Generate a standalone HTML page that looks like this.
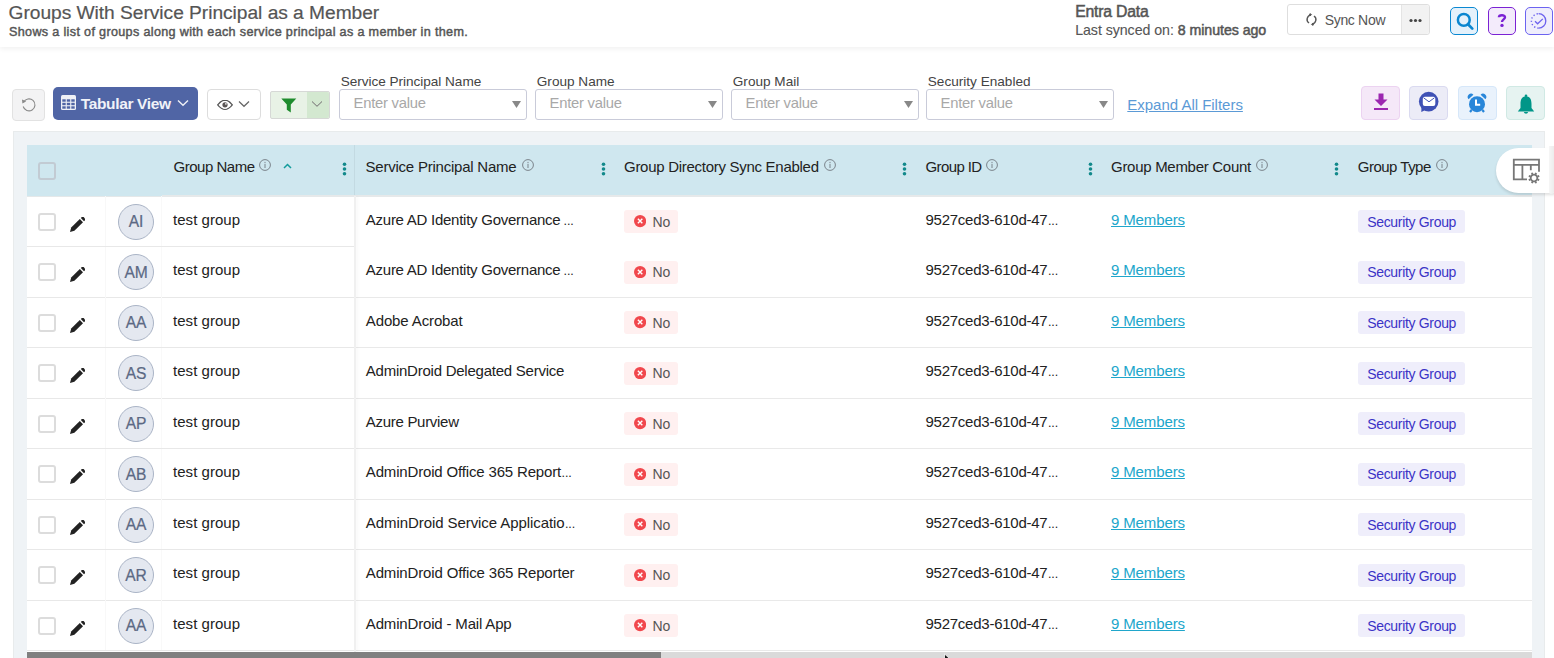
<!DOCTYPE html><html><head><meta charset="utf-8"><style>
*{box-sizing:border-box;margin:0;padding:0}
html,body{width:1554px;height:658px;overflow:hidden;background:#fff;font-family:"Liberation Sans",sans-serif;color:#222}
.a{position:absolute;white-space:nowrap}
</style></head><body>
<div class="a" style="left:0;top:0;width:1554px;height:47px;background:#fff;box-shadow:0 2px 5px rgba(0,0,0,0.06)"></div>
<div class="a" style="left:8.50px;top:0.00px;font-size:19.2px;line-height:25px;letter-spacing:-0.035px;color:#555;-webkit-text-stroke:0.2px #555">Groups With Service Principal as a Member</div>
<div class="a" style="left:9.00px;top:24.00px;font-size:12.6px;line-height:16px;letter-spacing:0.335px;color:#555;-webkit-text-stroke:0.45px #555">Shows a list of groups along with each service principal as a member in them.</div>
<div class="a" style="left:1075.20px;top:1.00px;font-size:15.8px;line-height:21px;letter-spacing:-0.226px;color:#555;-webkit-text-stroke:0.5px #555">Entra Data</div>
<div class="a" style="left:1075.20px;top:21.00px;font-size:14.2px;line-height:18px;letter-spacing:-0.050px;color:#555;-webkit-text-stroke:0.1px #555">Last synced on: <span style="-webkit-text-stroke:0.5px #555">8 minutes ago</span></div>
<div class="a" style="left:1287px;top:4px;width:143px;height:31px;border:1px solid #dedede;border-radius:3px;background:#fff"></div>
<div class="a" style="left:1401px;top:5px;width:28px;height:29px;background:#f2f2f2;border-left:1px solid #e4e4e4;border-radius:0 3px 3px 0"></div>
<svg class="a" style="left:1305px;top:13px" width="13" height="13" viewBox="0 0 13 13"><g transform="rotate(-55 6.5 6.5)"><path d="M2.2 6.5 A4.3 4.3 0 0 1 9.8 3.6" fill="none" stroke="#555" stroke-width="1.4"/><path d="M10.8 6.5 A4.3 4.3 0 0 1 3.2 9.4" fill="none" stroke="#555" stroke-width="1.4"/><path d="M8.3 1.8 L11 1.6 L10.6 4.6 Z" fill="#555"/><path d="M4.7 11.2 L2 11.4 L2.4 8.4 Z" fill="#555"/></g></svg>
<div class="a" style="left:1324.70px;top:11.00px;font-size:14px;line-height:18px;letter-spacing:-0.317px;color:#555;">Sync Now</div>
<svg class="a" style="left:1409px;top:18px" width="13" height="5"><circle cx="2" cy="2.5" r="1.6" fill="#444"/><circle cx="6.5" cy="2.5" r="1.6" fill="#444"/><circle cx="11" cy="2.5" r="1.6" fill="#444"/></svg>
<div class="a" style="left:1450px;top:7px;width:28px;height:28px;border:1.5px solid #0a88d2;border-radius:5px;background:#e4f1fb"></div>
<svg class="a" style="left:1455px;top:12px" width="20" height="20" viewBox="0 0 20 20"><circle cx="8.8" cy="7.9" r="5.9" fill="none" stroke="#0a86d0" stroke-width="2.5"/><path d="M13 12.2 L17.3 16.6" stroke="#0a86d0" stroke-width="2.7" stroke-linecap="round"/></svg>
<div class="a" style="left:1488px;top:7px;width:28px;height:28px;border:1.5px solid #7b22d4;border-radius:5px;background:#f3ebfb"></div>
<svg class="a" style="left:1495px;top:13px" width="14" height="15" viewBox="0 0 14 15"><path d="M3.9 4.3 C3.9 1.6 10 1.4 10 4.3 C10 6.3 7 6.5 7 8.9" fill="none" stroke="#7b22d4" stroke-width="2.4"/><circle cx="7" cy="12.4" r="1.7" fill="#7b22d4"/></svg>
<div class="a" style="left:1525px;top:7px;width:28px;height:28px;border:1.5px solid #6c63f0;border-radius:5px;background:#efeefc"></div>
<svg class="a" style="left:1529px;top:12px" width="20" height="20" viewBox="0 0 20 20"><path d="M9.6 1.7 A7.2 7.2 0 0 1 9.6 16.1" fill="none" stroke="#6c62ee" stroke-width="1.3"/><path d="M9.6 16.1 A7.2 7.2 0 0 1 9.6 1.7" fill="none" stroke="#6c62ee" stroke-width="1.4" stroke-dasharray="1.3 2.1"/><path d="M6 9.3 L8.6 11.8 L13.8 6.9" fill="none" stroke="#6c62ee" stroke-width="1.3"/></svg>
<div class="a" style="left:12px;top:89px;width:33px;height:32px;border:1px solid #e2e2e2;border-radius:4px;background:#f3f3f4"></div>
<svg class="a" style="left:20px;top:96px" width="17" height="17" viewBox="0 0 17 17"><path d="M3.6 6.2 A6 6 0 1 1 3.2 10.5" fill="none" stroke="#888" stroke-width="1.1"/><path d="M2 3.5 L6.2 5.2 L2.4 7.6 Z" fill="#888"/></svg>
<div class="a" style="left:53px;top:87px;width:145px;height:33px;border-radius:5px;background:#5065a5"></div>
<svg class="a" style="left:61px;top:95px" width="15" height="15" viewBox="0 0 15 15"><rect x="0" y="0" width="15" height="15" rx="1.5" fill="#eef0f6"/><g fill="#5065a5"><rect x="1.3" y="4.3" width="3.4" height="2.4"/><rect x="5.8" y="4.3" width="3.4" height="2.4"/><rect x="10.3" y="4.3" width="3.4" height="2.4"/><rect x="1.3" y="7.8" width="3.4" height="2.4"/><rect x="5.8" y="7.8" width="3.4" height="2.4"/><rect x="10.3" y="7.8" width="3.4" height="2.4"/><rect x="1.3" y="11.3" width="3.4" height="2.4"/><rect x="5.8" y="11.3" width="3.4" height="2.4"/><rect x="10.3" y="11.3" width="3.4" height="2.4"/></g></svg>
<div class="a" style="left:80.70px;top:94.00px;font-size:15.5px;line-height:20px;letter-spacing:-0.344px;font-weight:bold;color:#f0f2f8;">Tabular View</div>
<svg class="a" style="left:177px;top:99px" width="12" height="8" viewBox="0 0 12 8"><path d="M1 1.5 L6 6.3 L11 1.5" fill="none" stroke="#eef0f6" stroke-width="1.4"/></svg>
<div class="a" style="left:207px;top:89px;width:54px;height:31px;border:1px solid #dddddd;border-radius:4px;background:#fff"></div>
<svg class="a" style="left:217px;top:99.5px" width="16" height="10" viewBox="0 0 16 10"><path d="M0.7 4.8 Q8 -4.3 15.3 4.8 Q8 13.9 0.7 4.8 Z" fill="none" stroke="#555" stroke-width="1.3"/><circle cx="8" cy="4.8" r="3.9" fill="#fff"/><circle cx="8" cy="4.8" r="2.6" fill="#5a5555"/><circle cx="8.9" cy="3.9" r="0.8" fill="#fff"/></svg>
<svg class="a" style="left:238px;top:100px" width="12" height="8" viewBox="0 0 12 8"><path d="M1 1.5 L6 6.3 L11 1.5" fill="none" stroke="#666" stroke-width="1.2"/></svg>
<div class="a" style="left:270px;top:91px;width:60px;height:28px;border:1px solid #d6d8d6;border-radius:2px;background:#e8f2e6"></div>
<div class="a" style="left:307px;top:92px;width:22px;height:26px;background:#d3e8d0;border-radius:0 2px 2px 0"></div>
<svg class="a" style="left:281px;top:98px" width="16" height="15" viewBox="0 0 16 15"><path d="M0.3 0.5 L15.3 0.5 L9.8 6.6 L9.8 14.5 L5.8 11.8 L5.8 6.6 Z" fill="#1e8b2d"/></svg>
<svg class="a" style="left:311px;top:100px" width="12" height="8" viewBox="0 0 12 8"><path d="M1 1.5 L6 6.3 L11 1.5" fill="none" stroke="#6f6a6e" stroke-width="1"/></svg>
<div class="a" style="left:340.80px;top:73.00px;font-size:13.6px;line-height:18px;letter-spacing:-0.040px;color:#444;">Service Principal Name</div>
<div class="a" style="left:339px;top:89px;width:188px;height:31px;border:1px solid #c9cbd9;border-radius:3px;background:#fff"></div>
<div class="a" style="left:353.60px;top:94.00px;font-size:14.8px;line-height:19px;letter-spacing:-0.257px;color:#a8a8a8;">Enter value</div>
<svg class="a" style="left:512px;top:101px" width="9" height="7" viewBox="0 0 9 7"><path d="M0 0 L9 0 L4.5 7 Z" fill="#888"/></svg>
<div class="a" style="left:536.80px;top:73.00px;font-size:13.6px;line-height:18px;letter-spacing:0.000px;color:#444;">Group Name</div>
<div class="a" style="left:535px;top:89px;width:188px;height:31px;border:1px solid #c9cbd9;border-radius:3px;background:#fff"></div>
<div class="a" style="left:549.60px;top:94.00px;font-size:14.8px;line-height:19px;letter-spacing:-0.257px;color:#a8a8a8;">Enter value</div>
<svg class="a" style="left:708px;top:101px" width="9" height="7" viewBox="0 0 9 7"><path d="M0 0 L9 0 L4.5 7 Z" fill="#888"/></svg>
<div class="a" style="left:732.80px;top:73.00px;font-size:13.6px;line-height:18px;letter-spacing:0.000px;color:#444;">Group Mail</div>
<div class="a" style="left:731px;top:89px;width:188px;height:31px;border:1px solid #c9cbd9;border-radius:3px;background:#fff"></div>
<div class="a" style="left:745.60px;top:94.00px;font-size:14.8px;line-height:19px;letter-spacing:-0.257px;color:#a8a8a8;">Enter value</div>
<svg class="a" style="left:904px;top:101px" width="9" height="7" viewBox="0 0 9 7"><path d="M0 0 L9 0 L4.5 7 Z" fill="#888"/></svg>
<div class="a" style="left:927.80px;top:73.00px;font-size:13.6px;line-height:18px;letter-spacing:0.000px;color:#444;">Security Enabled</div>
<div class="a" style="left:926px;top:89px;width:188px;height:31px;border:1px solid #c9cbd9;border-radius:3px;background:#fff"></div>
<div class="a" style="left:940.60px;top:94.00px;font-size:14.8px;line-height:19px;letter-spacing:-0.257px;color:#a8a8a8;">Enter value</div>
<svg class="a" style="left:1099px;top:101px" width="9" height="7" viewBox="0 0 9 7"><path d="M0 0 L9 0 L4.5 7 Z" fill="#888"/></svg>
<div class="a" style="left:1127.30px;top:95.00px;font-size:15px;line-height:20px;letter-spacing:-0.017px;color:#5b9ad6;text-decoration:underline">Expand All Filters</div>
<div class="a" style="left:1361px;top:86px;width:39px;height:34px;border:1px solid #ecd3f1;border-radius:4px;background:#f5e8f8"></div>
<svg class="a" style="left:1373px;top:93px" width="16" height="18" viewBox="0 0 16 18"><path d="M5.5 0.5 L10.5 0.5 L10.5 6.5 L14.5 6.5 L8 13 L1.5 6.5 L5.5 6.5 Z" fill="#9c27b0"/><rect x="1" y="15" width="14" height="2" fill="#9c27b0"/></svg>
<div class="a" style="left:1409px;top:86px;width:39px;height:34px;border:1px solid #dadaf0;border-radius:4px;background:#ececf7"></div>
<svg class="a" style="left:1418px;top:91px" width="22" height="22" viewBox="0 0 22 22"><circle cx="10.7" cy="10.6" r="9.8" fill="#3f51b5"/><path d="M3.5 15.5 L3.3 21 L8.5 18.5 Z" fill="#3f51b5"/><rect x="4.8" y="5.8" width="12.5" height="9.2" rx="2" fill="#fff"/><path d="M5.6 6.8 L11 10.8 L16.4 6.8" fill="none" stroke="#3f51b5" stroke-width="1"/></svg>
<div class="a" style="left:1458px;top:86px;width:39px;height:34px;border:1px solid #d6e7f9;border-radius:4px;background:#e9f2fc"></div>
<svg class="a" style="left:1467px;top:93px" width="20" height="20" viewBox="0 0 20 20"><circle cx="10" cy="11.2" r="8" fill="#2886d9"/><path d="M1.6 6.2 A3.1 3.1 0 0 1 6.4 1.8 Z" fill="#2886d9"/><path d="M18.4 6.2 A3.1 3.1 0 0 0 13.6 1.8 Z" fill="#2886d9"/><path d="M9 6.5 L9 11.8 L13.2 11.8" fill="none" stroke="#fff" stroke-width="2"/><path d="M4.6 17 L3 19 M15.4 17 L17 19" stroke="#2886d9" stroke-width="2.2"/></svg>
<div class="a" style="left:1506px;top:86px;width:39px;height:34px;border:1px solid #d0e9e4;border-radius:4px;background:#e6f3f1"></div>
<svg class="a" style="left:1517px;top:93.5px" width="18" height="21" viewBox="0 0 18 21"><circle cx="9" cy="1.8" r="1.3" fill="#009688"/><path d="M9 2.2 C4.5 2.2 3.5 6 3.5 10 L3.5 14 L0.8 17.5 L17.2 17.5 L14.5 14 L14.5 10 C14.5 6 13.5 2.2 9 2.2 Z" fill="#009688"/><path d="M6.8 18 A2.3 2.3 0 0 0 11.2 18 Z" fill="#009688"/></svg>
<div class="a" style="left:13px;top:131px;width:1532px;height:527px;background:#eff3f6;border:1px solid #e8ebec;border-bottom:none"></div>
<div class="a" style="left:27px;top:145px;width:1505px;height:513px;background:#fff;overflow:hidden">
<div class="a" style="left:0;top:0;width:1505px;height:51px;background:#cfe7ef"></div>
<div class="a" style="left:11px;top:17px;width:18px;height:18px;border:2px solid #c2cbd3;border-radius:3px;background:#cfe7ef"></div>
<div class="a" style="left:146.50px;top:12.00px;font-size:15px;line-height:20px;letter-spacing:-0.486px;color:#222;">Group Name</div>
<svg class="a" style="left:232px;top:14.4px" width="12" height="12" viewBox="0 0 12 12"><circle cx="6" cy="6" r="5.4" fill="none" stroke="#7b838b" stroke-width="1"/><rect x="5.5" y="4.8" width="1" height="4.2" fill="#7b838b"/><circle cx="6" cy="3.3" r="0.65" fill="#7b838b"/></svg>
<svg class="a" style="left:314.5px;top:16.8px" width="5" height="14" viewBox="0 0 5 14"><circle cx="2.5" cy="2.3" r="1.8" fill="#12898b"/><circle cx="2.5" cy="7" r="1.8" fill="#12898b"/><circle cx="2.5" cy="11.7" r="1.8" fill="#12898b"/></svg>
<div class="a" style="left:338.60px;top:12.00px;font-size:15px;line-height:20px;letter-spacing:-0.233px;color:#222;">Service Principal Name</div>
<svg class="a" style="left:495px;top:14.4px" width="12" height="12" viewBox="0 0 12 12"><circle cx="6" cy="6" r="5.4" fill="none" stroke="#7b838b" stroke-width="1"/><rect x="5.5" y="4.8" width="1" height="4.2" fill="#7b838b"/><circle cx="6" cy="3.3" r="0.65" fill="#7b838b"/></svg>
<svg class="a" style="left:574.0px;top:16.8px" width="5" height="14" viewBox="0 0 5 14"><circle cx="2.5" cy="2.3" r="1.8" fill="#12898b"/><circle cx="2.5" cy="7" r="1.8" fill="#12898b"/><circle cx="2.5" cy="11.7" r="1.8" fill="#12898b"/></svg>
<div class="a" style="left:597.00px;top:12.00px;font-size:15px;line-height:20px;letter-spacing:-0.282px;color:#222;">Group Directory Sync Enabled</div>
<svg class="a" style="left:796.5px;top:14.4px" width="12" height="12" viewBox="0 0 12 12"><circle cx="6" cy="6" r="5.4" fill="none" stroke="#7b838b" stroke-width="1"/><rect x="5.5" y="4.8" width="1" height="4.2" fill="#7b838b"/><circle cx="6" cy="3.3" r="0.65" fill="#7b838b"/></svg>
<svg class="a" style="left:874.5px;top:16.8px" width="5" height="14" viewBox="0 0 5 14"><circle cx="2.5" cy="2.3" r="1.8" fill="#12898b"/><circle cx="2.5" cy="7" r="1.8" fill="#12898b"/><circle cx="2.5" cy="11.7" r="1.8" fill="#12898b"/></svg>
<div class="a" style="left:898.60px;top:12.00px;font-size:15px;line-height:20px;letter-spacing:-0.637px;color:#222;">Group ID</div>
<svg class="a" style="left:959px;top:14.4px" width="12" height="12" viewBox="0 0 12 12"><circle cx="6" cy="6" r="5.4" fill="none" stroke="#7b838b" stroke-width="1"/><rect x="5.5" y="4.8" width="1" height="4.2" fill="#7b838b"/><circle cx="6" cy="3.3" r="0.65" fill="#7b838b"/></svg>
<svg class="a" style="left:1060.5px;top:16.8px" width="5" height="14" viewBox="0 0 5 14"><circle cx="2.5" cy="2.3" r="1.8" fill="#12898b"/><circle cx="2.5" cy="7" r="1.8" fill="#12898b"/><circle cx="2.5" cy="11.7" r="1.8" fill="#12898b"/></svg>
<div class="a" style="left:1084.00px;top:12.00px;font-size:15px;line-height:20px;letter-spacing:-0.286px;color:#222;">Group Member Count</div>
<svg class="a" style="left:1229px;top:14.4px" width="12" height="12" viewBox="0 0 12 12"><circle cx="6" cy="6" r="5.4" fill="none" stroke="#7b838b" stroke-width="1"/><rect x="5.5" y="4.8" width="1" height="4.2" fill="#7b838b"/><circle cx="6" cy="3.3" r="0.65" fill="#7b838b"/></svg>
<svg class="a" style="left:1306.8px;top:16.8px" width="5" height="14" viewBox="0 0 5 14"><circle cx="2.5" cy="2.3" r="1.8" fill="#12898b"/><circle cx="2.5" cy="7" r="1.8" fill="#12898b"/><circle cx="2.5" cy="11.7" r="1.8" fill="#12898b"/></svg>
<div class="a" style="left:1330.80px;top:12.00px;font-size:15px;line-height:20px;letter-spacing:-0.512px;color:#222;">Group Type</div>
<svg class="a" style="left:1409px;top:14.4px" width="12" height="12" viewBox="0 0 12 12"><circle cx="6" cy="6" r="5.4" fill="none" stroke="#7b838b" stroke-width="1"/><rect x="5.5" y="4.8" width="1" height="4.2" fill="#7b838b"/><circle cx="6" cy="3.3" r="0.65" fill="#7b838b"/></svg>
<svg class="a" style="left:256px;top:18px" width="9" height="6" viewBox="0 0 9 6"><path d="M1 5 L4.5 1.5 L8 5" fill="none" stroke="#139c9c" stroke-width="1.5"/></svg>
<div class="a" style="left:327px;top:0;width:1px;height:51px;background:#c3dae2"></div>
<div class="a" style="left:135px;top:49.7px;width:1370px;height:2.2px;background:#e6e9ea"></div>
<div class="a" style="left:0;top:50.6px;width:135px;height:1px;background:#e4e8e9"></div>
<div class="a" style="left:0;top:101.0px;width:328px;height:1px;background:#e8e8e8"></div>
<div class="a" style="left:11px;top:67.5px;width:18px;height:18px;border:2px solid #dcdcdc;border-radius:3px;background:#fff"></div>
<svg class="a" style="left:42px;top:71.5px" width="16" height="16" viewBox="0 0 16 16"><path d="M1 15 L2.2 10.6 L10.8 2 L14 5.2 L5.4 13.8 Z" fill="#222"/><path d="M11.8 1 L13 -0.2 A1 1 0 0 1 14.4 -0.2 L16.2 1.6 A1 1 0 0 1 16.2 3 L15 4.2 Z" fill="#222"/></svg>
<div class="a" style="left:78px;top:51.0px;width:1px;height:50px;background:#f8f8f8"></div>
<div class="a" style="left:134px;top:51.0px;width:1px;height:50px;background:#f9f9f9"></div>
<div class="a" style="left:91px;top:58.5px;width:36px;height:36px;border-radius:50%;background:#e4e8f0;border:1px solid #aab4c6"></div>
<div class="a" style="left:91.00px;top:67.00px;font-size:15.6px;line-height:20px;letter-spacing:-0.150px;color:#5b6984;width:36px;text-align:center;text-indent:-0.15px;-webkit-text-stroke:0.22px #5b6984">AI</div>
<div class="a" style="left:146.00px;top:65.00px;font-size:15px;line-height:20px;letter-spacing:0.043px;color:#222;">test group</div>
<div class="a" style="left:338.80px;top:65.00px;font-size:15px;line-height:20px;letter-spacing:-0.255px;color:#222;">Azure AD Identity Governance</div>
<div class="a" style="left:536.60px;top:68.00px;font-size:12.5px;line-height:16px;letter-spacing:-0.100px;color:#222;">...</div>
<div class="a" style="left:597px;top:65.0px;width:54px;height:23px;border-radius:3px;background:#fff0f0"></div>
<svg class="a" style="left:606.6px;top:70.4px" width="12.2" height="12.2" viewBox="0 0 12 12"><circle cx="6" cy="6" r="6" fill="#f1474c"/><path d="M3.8 3.8 L8.2 8.2 M8.2 3.8 L3.8 8.2" stroke="#fff" stroke-width="1.4"/></svg>
<div class="a" style="left:625.50px;top:68.00px;font-size:14px;line-height:18px;letter-spacing:0.000px;color:#555;">No</div>
<div class="a" style="left:898.50px;top:65.00px;font-size:15px;line-height:20px;letter-spacing:-0.250px;color:#222;">9527ced3-610d-47</div>
<div class="a" style="left:1020.90px;top:68.00px;font-size:12.5px;line-height:16px;letter-spacing:-0.100px;color:#222;">...</div>
<div class="a" style="left:1084.00px;top:65.00px;font-size:15px;line-height:20px;letter-spacing:-0.128px;color:#20a6cb;text-decoration:underline">9 Members</div>
<div class="a" style="left:1331px;top:65.0px;width:107px;height:23px;border-radius:3px;background:#efeefb"></div>
<div class="a" style="left:1340.20px;top:68.00px;font-size:14px;line-height:18px;letter-spacing:-0.321px;color:#3b33c6;">Security Group</div>
<div class="a" style="left:0;top:151.5px;width:328px;height:1px;background:#e8e8e8"></div>
<div class="a" style="left:328px;top:151.5px;width:1177px;height:1px;background:#e9e9e9"></div>
<div class="a" style="left:11px;top:118.0px;width:18px;height:18px;border:2px solid #dcdcdc;border-radius:3px;background:#fff"></div>
<svg class="a" style="left:42px;top:122.0px" width="16" height="16" viewBox="0 0 16 16"><path d="M1 15 L2.2 10.6 L10.8 2 L14 5.2 L5.4 13.8 Z" fill="#222"/><path d="M11.8 1 L13 -0.2 A1 1 0 0 1 14.4 -0.2 L16.2 1.6 A1 1 0 0 1 16.2 3 L15 4.2 Z" fill="#222"/></svg>
<div class="a" style="left:78px;top:101.5px;width:1px;height:50px;background:#f8f8f8"></div>
<div class="a" style="left:134px;top:101.5px;width:1px;height:50px;background:#f9f9f9"></div>
<div class="a" style="left:91px;top:109.0px;width:36px;height:36px;border-radius:50%;background:#e4e8f0;border:1px solid #aab4c6"></div>
<div class="a" style="left:91.00px;top:118.00px;font-size:15.6px;line-height:20px;letter-spacing:-0.150px;color:#5b6984;width:36px;text-align:center;text-indent:-0.15px;-webkit-text-stroke:0.22px #5b6984">AM</div>
<div class="a" style="left:146.00px;top:115.00px;font-size:15px;line-height:20px;letter-spacing:0.043px;color:#222;">test group</div>
<div class="a" style="left:338.80px;top:115.00px;font-size:15px;line-height:20px;letter-spacing:-0.255px;color:#222;">Azure AD Identity Governance</div>
<div class="a" style="left:536.60px;top:118.00px;font-size:12.5px;line-height:16px;letter-spacing:-0.100px;color:#222;">...</div>
<div class="a" style="left:597px;top:115.5px;width:54px;height:23px;border-radius:3px;background:#fff0f0"></div>
<svg class="a" style="left:606.6px;top:120.9px" width="12.2" height="12.2" viewBox="0 0 12 12"><circle cx="6" cy="6" r="6" fill="#f1474c"/><path d="M3.8 3.8 L8.2 8.2 M8.2 3.8 L3.8 8.2" stroke="#fff" stroke-width="1.4"/></svg>
<div class="a" style="left:625.50px;top:118.00px;font-size:14px;line-height:18px;letter-spacing:0.000px;color:#555;">No</div>
<div class="a" style="left:898.50px;top:115.00px;font-size:15px;line-height:20px;letter-spacing:-0.250px;color:#222;">9527ced3-610d-47</div>
<div class="a" style="left:1020.90px;top:118.00px;font-size:12.5px;line-height:16px;letter-spacing:-0.100px;color:#222;">...</div>
<div class="a" style="left:1084.00px;top:115.00px;font-size:15px;line-height:20px;letter-spacing:-0.128px;color:#20a6cb;text-decoration:underline">9 Members</div>
<div class="a" style="left:1331px;top:115.5px;width:107px;height:23px;border-radius:3px;background:#efeefb"></div>
<div class="a" style="left:1340.20px;top:118.00px;font-size:14px;line-height:18px;letter-spacing:-0.321px;color:#3b33c6;">Security Group</div>
<div class="a" style="left:0;top:202.0px;width:328px;height:1px;background:#e8e8e8"></div>
<div class="a" style="left:328px;top:202.0px;width:1177px;height:1px;background:#e9e9e9"></div>
<div class="a" style="left:11px;top:168.5px;width:18px;height:18px;border:2px solid #dcdcdc;border-radius:3px;background:#fff"></div>
<svg class="a" style="left:42px;top:172.5px" width="16" height="16" viewBox="0 0 16 16"><path d="M1 15 L2.2 10.6 L10.8 2 L14 5.2 L5.4 13.8 Z" fill="#222"/><path d="M11.8 1 L13 -0.2 A1 1 0 0 1 14.4 -0.2 L16.2 1.6 A1 1 0 0 1 16.2 3 L15 4.2 Z" fill="#222"/></svg>
<div class="a" style="left:78px;top:152.0px;width:1px;height:50px;background:#f8f8f8"></div>
<div class="a" style="left:134px;top:152.0px;width:1px;height:50px;background:#f9f9f9"></div>
<div class="a" style="left:91px;top:159.5px;width:36px;height:36px;border-radius:50%;background:#e4e8f0;border:1px solid #aab4c6"></div>
<div class="a" style="left:91.00px;top:168.00px;font-size:15.6px;line-height:20px;letter-spacing:-0.150px;color:#5b6984;width:36px;text-align:center;text-indent:-0.15px;-webkit-text-stroke:0.22px #5b6984">AA</div>
<div class="a" style="left:146.00px;top:166.00px;font-size:15px;line-height:20px;letter-spacing:0.043px;color:#222;">test group</div>
<div class="a" style="left:338.80px;top:166.00px;font-size:15px;line-height:20px;letter-spacing:-0.126px;color:#222;">Adobe Acrobat</div>
<div class="a" style="left:597px;top:166.0px;width:54px;height:23px;border-radius:3px;background:#fff0f0"></div>
<svg class="a" style="left:606.6px;top:171.4px" width="12.2" height="12.2" viewBox="0 0 12 12"><circle cx="6" cy="6" r="6" fill="#f1474c"/><path d="M3.8 3.8 L8.2 8.2 M8.2 3.8 L3.8 8.2" stroke="#fff" stroke-width="1.4"/></svg>
<div class="a" style="left:625.50px;top:169.00px;font-size:14px;line-height:18px;letter-spacing:0.000px;color:#555;">No</div>
<div class="a" style="left:898.50px;top:166.00px;font-size:15px;line-height:20px;letter-spacing:-0.250px;color:#222;">9527ced3-610d-47</div>
<div class="a" style="left:1020.90px;top:169.00px;font-size:12.5px;line-height:16px;letter-spacing:-0.100px;color:#222;">...</div>
<div class="a" style="left:1084.00px;top:166.00px;font-size:15px;line-height:20px;letter-spacing:-0.128px;color:#20a6cb;text-decoration:underline">9 Members</div>
<div class="a" style="left:1331px;top:166.0px;width:107px;height:23px;border-radius:3px;background:#efeefb"></div>
<div class="a" style="left:1340.20px;top:169.00px;font-size:14px;line-height:18px;letter-spacing:-0.321px;color:#3b33c6;">Security Group</div>
<div class="a" style="left:0;top:252.5px;width:328px;height:1px;background:#e8e8e8"></div>
<div class="a" style="left:328px;top:252.5px;width:1177px;height:1px;background:#e9e9e9"></div>
<div class="a" style="left:11px;top:219.0px;width:18px;height:18px;border:2px solid #dcdcdc;border-radius:3px;background:#fff"></div>
<svg class="a" style="left:42px;top:223.0px" width="16" height="16" viewBox="0 0 16 16"><path d="M1 15 L2.2 10.6 L10.8 2 L14 5.2 L5.4 13.8 Z" fill="#222"/><path d="M11.8 1 L13 -0.2 A1 1 0 0 1 14.4 -0.2 L16.2 1.6 A1 1 0 0 1 16.2 3 L15 4.2 Z" fill="#222"/></svg>
<div class="a" style="left:78px;top:202.5px;width:1px;height:50px;background:#f8f8f8"></div>
<div class="a" style="left:134px;top:202.5px;width:1px;height:50px;background:#f9f9f9"></div>
<div class="a" style="left:91px;top:210.0px;width:36px;height:36px;border-radius:50%;background:#e4e8f0;border:1px solid #aab4c6"></div>
<div class="a" style="left:91.00px;top:219.00px;font-size:15.6px;line-height:20px;letter-spacing:-0.150px;color:#5b6984;width:36px;text-align:center;text-indent:-0.15px;-webkit-text-stroke:0.22px #5b6984">AS</div>
<div class="a" style="left:146.00px;top:216.00px;font-size:15px;line-height:20px;letter-spacing:0.043px;color:#222;">test group</div>
<div class="a" style="left:338.80px;top:216.00px;font-size:15px;line-height:20px;letter-spacing:-0.241px;color:#222;">AdminDroid Delegated Service</div>
<div class="a" style="left:597px;top:216.5px;width:54px;height:23px;border-radius:3px;background:#fff0f0"></div>
<svg class="a" style="left:606.6px;top:221.9px" width="12.2" height="12.2" viewBox="0 0 12 12"><circle cx="6" cy="6" r="6" fill="#f1474c"/><path d="M3.8 3.8 L8.2 8.2 M8.2 3.8 L3.8 8.2" stroke="#fff" stroke-width="1.4"/></svg>
<div class="a" style="left:625.50px;top:219.00px;font-size:14px;line-height:18px;letter-spacing:0.000px;color:#555;">No</div>
<div class="a" style="left:898.50px;top:216.00px;font-size:15px;line-height:20px;letter-spacing:-0.250px;color:#222;">9527ced3-610d-47</div>
<div class="a" style="left:1020.90px;top:219.00px;font-size:12.5px;line-height:16px;letter-spacing:-0.100px;color:#222;">...</div>
<div class="a" style="left:1084.00px;top:216.00px;font-size:15px;line-height:20px;letter-spacing:-0.128px;color:#20a6cb;text-decoration:underline">9 Members</div>
<div class="a" style="left:1331px;top:216.5px;width:107px;height:23px;border-radius:3px;background:#efeefb"></div>
<div class="a" style="left:1340.20px;top:220.00px;font-size:14px;line-height:18px;letter-spacing:-0.321px;color:#3b33c6;">Security Group</div>
<div class="a" style="left:0;top:303.0px;width:328px;height:1px;background:#e8e8e8"></div>
<div class="a" style="left:328px;top:303.0px;width:1177px;height:1px;background:#e9e9e9"></div>
<div class="a" style="left:11px;top:269.5px;width:18px;height:18px;border:2px solid #dcdcdc;border-radius:3px;background:#fff"></div>
<svg class="a" style="left:42px;top:273.5px" width="16" height="16" viewBox="0 0 16 16"><path d="M1 15 L2.2 10.6 L10.8 2 L14 5.2 L5.4 13.8 Z" fill="#222"/><path d="M11.8 1 L13 -0.2 A1 1 0 0 1 14.4 -0.2 L16.2 1.6 A1 1 0 0 1 16.2 3 L15 4.2 Z" fill="#222"/></svg>
<div class="a" style="left:78px;top:253.0px;width:1px;height:50px;background:#f8f8f8"></div>
<div class="a" style="left:134px;top:253.0px;width:1px;height:50px;background:#f9f9f9"></div>
<div class="a" style="left:91px;top:260.5px;width:36px;height:36px;border-radius:50%;background:#e4e8f0;border:1px solid #aab4c6"></div>
<div class="a" style="left:91.00px;top:269.00px;font-size:15.6px;line-height:20px;letter-spacing:-0.150px;color:#5b6984;width:36px;text-align:center;text-indent:-0.15px;-webkit-text-stroke:0.22px #5b6984">AP</div>
<div class="a" style="left:146.00px;top:267.00px;font-size:15px;line-height:20px;letter-spacing:0.043px;color:#222;">test group</div>
<div class="a" style="left:338.80px;top:267.00px;font-size:15px;line-height:20px;letter-spacing:-0.292px;color:#222;">Azure Purview</div>
<div class="a" style="left:597px;top:267.0px;width:54px;height:23px;border-radius:3px;background:#fff0f0"></div>
<svg class="a" style="left:606.6px;top:272.4px" width="12.2" height="12.2" viewBox="0 0 12 12"><circle cx="6" cy="6" r="6" fill="#f1474c"/><path d="M3.8 3.8 L8.2 8.2 M8.2 3.8 L3.8 8.2" stroke="#fff" stroke-width="1.4"/></svg>
<div class="a" style="left:625.50px;top:270.00px;font-size:14px;line-height:18px;letter-spacing:0.000px;color:#555;">No</div>
<div class="a" style="left:898.50px;top:267.00px;font-size:15px;line-height:20px;letter-spacing:-0.250px;color:#222;">9527ced3-610d-47</div>
<div class="a" style="left:1020.90px;top:270.00px;font-size:12.5px;line-height:16px;letter-spacing:-0.100px;color:#222;">...</div>
<div class="a" style="left:1084.00px;top:267.00px;font-size:15px;line-height:20px;letter-spacing:-0.128px;color:#20a6cb;text-decoration:underline">9 Members</div>
<div class="a" style="left:1331px;top:267.0px;width:107px;height:23px;border-radius:3px;background:#efeefb"></div>
<div class="a" style="left:1340.20px;top:270.00px;font-size:14px;line-height:18px;letter-spacing:-0.321px;color:#3b33c6;">Security Group</div>
<div class="a" style="left:0;top:353.5px;width:328px;height:1px;background:#e8e8e8"></div>
<div class="a" style="left:328px;top:353.5px;width:1177px;height:1px;background:#e9e9e9"></div>
<div class="a" style="left:11px;top:320.0px;width:18px;height:18px;border:2px solid #dcdcdc;border-radius:3px;background:#fff"></div>
<svg class="a" style="left:42px;top:324.0px" width="16" height="16" viewBox="0 0 16 16"><path d="M1 15 L2.2 10.6 L10.8 2 L14 5.2 L5.4 13.8 Z" fill="#222"/><path d="M11.8 1 L13 -0.2 A1 1 0 0 1 14.4 -0.2 L16.2 1.6 A1 1 0 0 1 16.2 3 L15 4.2 Z" fill="#222"/></svg>
<div class="a" style="left:78px;top:303.5px;width:1px;height:50px;background:#f8f8f8"></div>
<div class="a" style="left:134px;top:303.5px;width:1px;height:50px;background:#f9f9f9"></div>
<div class="a" style="left:91px;top:311.0px;width:36px;height:36px;border-radius:50%;background:#e4e8f0;border:1px solid #aab4c6"></div>
<div class="a" style="left:91.00px;top:320.00px;font-size:15.6px;line-height:20px;letter-spacing:-0.150px;color:#5b6984;width:36px;text-align:center;text-indent:-0.15px;-webkit-text-stroke:0.22px #5b6984">AB</div>
<div class="a" style="left:146.00px;top:317.00px;font-size:15px;line-height:20px;letter-spacing:0.043px;color:#222;">test group</div>
<div class="a" style="left:338.80px;top:317.00px;font-size:15px;line-height:20px;letter-spacing:-0.164px;color:#222;">AdminDroid Office 365 Report</div>
<div class="a" style="left:534.60px;top:320.00px;font-size:12.5px;line-height:16px;letter-spacing:-0.100px;color:#222;">...</div>
<div class="a" style="left:597px;top:317.5px;width:54px;height:23px;border-radius:3px;background:#fff0f0"></div>
<svg class="a" style="left:606.6px;top:322.9px" width="12.2" height="12.2" viewBox="0 0 12 12"><circle cx="6" cy="6" r="6" fill="#f1474c"/><path d="M3.8 3.8 L8.2 8.2 M8.2 3.8 L3.8 8.2" stroke="#fff" stroke-width="1.4"/></svg>
<div class="a" style="left:625.50px;top:320.00px;font-size:14px;line-height:18px;letter-spacing:0.000px;color:#555;">No</div>
<div class="a" style="left:898.50px;top:317.00px;font-size:15px;line-height:20px;letter-spacing:-0.250px;color:#222;">9527ced3-610d-47</div>
<div class="a" style="left:1020.90px;top:320.00px;font-size:12.5px;line-height:16px;letter-spacing:-0.100px;color:#222;">...</div>
<div class="a" style="left:1084.00px;top:317.00px;font-size:15px;line-height:20px;letter-spacing:-0.128px;color:#20a6cb;text-decoration:underline">9 Members</div>
<div class="a" style="left:1331px;top:317.5px;width:107px;height:23px;border-radius:3px;background:#efeefb"></div>
<div class="a" style="left:1340.20px;top:320.00px;font-size:14px;line-height:18px;letter-spacing:-0.321px;color:#3b33c6;">Security Group</div>
<div class="a" style="left:0;top:404.0px;width:328px;height:1px;background:#e8e8e8"></div>
<div class="a" style="left:328px;top:404.0px;width:1177px;height:1px;background:#e9e9e9"></div>
<div class="a" style="left:11px;top:370.5px;width:18px;height:18px;border:2px solid #dcdcdc;border-radius:3px;background:#fff"></div>
<svg class="a" style="left:42px;top:374.5px" width="16" height="16" viewBox="0 0 16 16"><path d="M1 15 L2.2 10.6 L10.8 2 L14 5.2 L5.4 13.8 Z" fill="#222"/><path d="M11.8 1 L13 -0.2 A1 1 0 0 1 14.4 -0.2 L16.2 1.6 A1 1 0 0 1 16.2 3 L15 4.2 Z" fill="#222"/></svg>
<div class="a" style="left:78px;top:354.0px;width:1px;height:50px;background:#f8f8f8"></div>
<div class="a" style="left:134px;top:354.0px;width:1px;height:50px;background:#f9f9f9"></div>
<div class="a" style="left:91px;top:361.5px;width:36px;height:36px;border-radius:50%;background:#e4e8f0;border:1px solid #aab4c6"></div>
<div class="a" style="left:91.00px;top:370.00px;font-size:15.6px;line-height:20px;letter-spacing:-0.150px;color:#5b6984;width:36px;text-align:center;text-indent:-0.15px;-webkit-text-stroke:0.22px #5b6984">AA</div>
<div class="a" style="left:146.00px;top:368.00px;font-size:15px;line-height:20px;letter-spacing:0.043px;color:#222;">test group</div>
<div class="a" style="left:338.80px;top:368.00px;font-size:15px;line-height:20px;letter-spacing:-0.073px;color:#222;">AdminDroid Service Applicatio</div>
<div class="a" style="left:538.00px;top:371.00px;font-size:12.5px;line-height:16px;letter-spacing:-0.100px;color:#222;">...</div>
<div class="a" style="left:597px;top:368.0px;width:54px;height:23px;border-radius:3px;background:#fff0f0"></div>
<svg class="a" style="left:606.6px;top:373.4px" width="12.2" height="12.2" viewBox="0 0 12 12"><circle cx="6" cy="6" r="6" fill="#f1474c"/><path d="M3.8 3.8 L8.2 8.2 M8.2 3.8 L3.8 8.2" stroke="#fff" stroke-width="1.4"/></svg>
<div class="a" style="left:625.50px;top:371.00px;font-size:14px;line-height:18px;letter-spacing:0.000px;color:#555;">No</div>
<div class="a" style="left:898.50px;top:368.00px;font-size:15px;line-height:20px;letter-spacing:-0.250px;color:#222;">9527ced3-610d-47</div>
<div class="a" style="left:1020.90px;top:371.00px;font-size:12.5px;line-height:16px;letter-spacing:-0.100px;color:#222;">...</div>
<div class="a" style="left:1084.00px;top:368.00px;font-size:15px;line-height:20px;letter-spacing:-0.128px;color:#20a6cb;text-decoration:underline">9 Members</div>
<div class="a" style="left:1331px;top:368.0px;width:107px;height:23px;border-radius:3px;background:#efeefb"></div>
<div class="a" style="left:1340.20px;top:371.00px;font-size:14px;line-height:18px;letter-spacing:-0.321px;color:#3b33c6;">Security Group</div>
<div class="a" style="left:0;top:454.5px;width:328px;height:1px;background:#e8e8e8"></div>
<div class="a" style="left:328px;top:454.5px;width:1177px;height:1px;background:#e9e9e9"></div>
<div class="a" style="left:11px;top:421.0px;width:18px;height:18px;border:2px solid #dcdcdc;border-radius:3px;background:#fff"></div>
<svg class="a" style="left:42px;top:425.0px" width="16" height="16" viewBox="0 0 16 16"><path d="M1 15 L2.2 10.6 L10.8 2 L14 5.2 L5.4 13.8 Z" fill="#222"/><path d="M11.8 1 L13 -0.2 A1 1 0 0 1 14.4 -0.2 L16.2 1.6 A1 1 0 0 1 16.2 3 L15 4.2 Z" fill="#222"/></svg>
<div class="a" style="left:78px;top:404.5px;width:1px;height:50px;background:#f8f8f8"></div>
<div class="a" style="left:134px;top:404.5px;width:1px;height:50px;background:#f9f9f9"></div>
<div class="a" style="left:91px;top:412.0px;width:36px;height:36px;border-radius:50%;background:#e4e8f0;border:1px solid #aab4c6"></div>
<div class="a" style="left:91.00px;top:421.00px;font-size:15.6px;line-height:20px;letter-spacing:-0.150px;color:#5b6984;width:36px;text-align:center;text-indent:-0.15px;-webkit-text-stroke:0.22px #5b6984">AR</div>
<div class="a" style="left:146.00px;top:418.00px;font-size:15px;line-height:20px;letter-spacing:0.043px;color:#222;">test group</div>
<div class="a" style="left:338.80px;top:418.00px;font-size:15px;line-height:20px;letter-spacing:-0.150px;color:#222;">AdminDroid Office 365 Reporter</div>
<div class="a" style="left:597px;top:418.5px;width:54px;height:23px;border-radius:3px;background:#fff0f0"></div>
<svg class="a" style="left:606.6px;top:423.9px" width="12.2" height="12.2" viewBox="0 0 12 12"><circle cx="6" cy="6" r="6" fill="#f1474c"/><path d="M3.8 3.8 L8.2 8.2 M8.2 3.8 L3.8 8.2" stroke="#fff" stroke-width="1.4"/></svg>
<div class="a" style="left:625.50px;top:421.00px;font-size:14px;line-height:18px;letter-spacing:0.000px;color:#555;">No</div>
<div class="a" style="left:898.50px;top:418.00px;font-size:15px;line-height:20px;letter-spacing:-0.250px;color:#222;">9527ced3-610d-47</div>
<div class="a" style="left:1020.90px;top:421.00px;font-size:12.5px;line-height:16px;letter-spacing:-0.100px;color:#222;">...</div>
<div class="a" style="left:1084.00px;top:418.00px;font-size:15px;line-height:20px;letter-spacing:-0.128px;color:#20a6cb;text-decoration:underline">9 Members</div>
<div class="a" style="left:1331px;top:418.5px;width:107px;height:23px;border-radius:3px;background:#efeefb"></div>
<div class="a" style="left:1340.20px;top:422.00px;font-size:14px;line-height:18px;letter-spacing:-0.321px;color:#3b33c6;">Security Group</div>
<div class="a" style="left:0;top:505.0px;width:328px;height:1px;background:#e8e8e8"></div>
<div class="a" style="left:328px;top:505.0px;width:1177px;height:1px;background:#e9e9e9"></div>
<div class="a" style="left:11px;top:471.5px;width:18px;height:18px;border:2px solid #dcdcdc;border-radius:3px;background:#fff"></div>
<svg class="a" style="left:42px;top:475.5px" width="16" height="16" viewBox="0 0 16 16"><path d="M1 15 L2.2 10.6 L10.8 2 L14 5.2 L5.4 13.8 Z" fill="#222"/><path d="M11.8 1 L13 -0.2 A1 1 0 0 1 14.4 -0.2 L16.2 1.6 A1 1 0 0 1 16.2 3 L15 4.2 Z" fill="#222"/></svg>
<div class="a" style="left:78px;top:455.0px;width:1px;height:50px;background:#f8f8f8"></div>
<div class="a" style="left:134px;top:455.0px;width:1px;height:50px;background:#f9f9f9"></div>
<div class="a" style="left:91px;top:462.5px;width:36px;height:36px;border-radius:50%;background:#e4e8f0;border:1px solid #aab4c6"></div>
<div class="a" style="left:91.00px;top:471.00px;font-size:15.6px;line-height:20px;letter-spacing:-0.150px;color:#5b6984;width:36px;text-align:center;text-indent:-0.15px;-webkit-text-stroke:0.22px #5b6984">AA</div>
<div class="a" style="left:146.00px;top:469.00px;font-size:15px;line-height:20px;letter-spacing:0.043px;color:#222;">test group</div>
<div class="a" style="left:338.80px;top:469.00px;font-size:15px;line-height:20px;letter-spacing:-0.167px;color:#222;">AdminDroid - Mail App</div>
<div class="a" style="left:597px;top:469.0px;width:54px;height:23px;border-radius:3px;background:#fff0f0"></div>
<svg class="a" style="left:606.6px;top:474.4px" width="12.2" height="12.2" viewBox="0 0 12 12"><circle cx="6" cy="6" r="6" fill="#f1474c"/><path d="M3.8 3.8 L8.2 8.2 M8.2 3.8 L3.8 8.2" stroke="#fff" stroke-width="1.4"/></svg>
<div class="a" style="left:625.50px;top:472.00px;font-size:14px;line-height:18px;letter-spacing:0.000px;color:#555;">No</div>
<div class="a" style="left:898.50px;top:469.00px;font-size:15px;line-height:20px;letter-spacing:-0.250px;color:#222;">9527ced3-610d-47</div>
<div class="a" style="left:1020.90px;top:472.00px;font-size:12.5px;line-height:16px;letter-spacing:-0.100px;color:#222;">...</div>
<div class="a" style="left:1084.00px;top:469.00px;font-size:15px;line-height:20px;letter-spacing:-0.128px;color:#20a6cb;text-decoration:underline">9 Members</div>
<div class="a" style="left:1331px;top:469.0px;width:107px;height:23px;border-radius:3px;background:#efeefb"></div>
<div class="a" style="left:1340.20px;top:472.00px;font-size:14px;line-height:18px;letter-spacing:-0.321px;color:#3b33c6;">Security Group</div>
<div class="a" style="left:327px;top:51px;width:2px;height:460px;background:#f0f0f0;box-shadow:2px 0 3px rgba(0,0,0,0.03)"></div>
</div>
<div class="a" style="left:27px;top:652px;width:1505px;height:6px;background:#dadada"></div>
<div class="a" style="left:27px;top:652px;width:634px;height:6px;background:#808080"></div>
<svg class="a" style="left:943px;top:653px" width="10" height="6" viewBox="0 0 10 6"><path d="M1.5 1 L1.5 8 L7 6 Z" fill="#111" stroke="#fff" stroke-width="0.8"/></svg>
<div class="a" style="left:1496px;top:148px;width:60px;height:45px;border-radius:23px 0 0 23px;background:#fff;box-shadow:0 2px 3px rgba(0,0,0,0.12)"></div>
<div class="a" style="left:1548.5px;top:146px;width:5.5px;height:48px;background:linear-gradient(90deg,#f6f6f6,#ececec);border-radius:0 0 3px 3px"></div>
<svg class="a" style="left:1512px;top:158px" width="29" height="26" viewBox="0 0 29 26"><path d="M15 21.4 L1.8 21.4 L1.8 1.6 L27 1.6 L27 13.7" fill="none" stroke="#777" stroke-width="1.8"/><path d="M1.8 6.8 L27 6.8 M10.4 6.8 L10.4 21.4 M18.8 6.8 L18.8 12.3" fill="none" stroke="#777" stroke-width="1.8"/><g transform="translate(22 20) rotate(22.5)"><circle r="3.3" fill="none" stroke="#777" stroke-width="1.8"/><path d="M0 -5.6 L0 -3.6 M0 5.6 L0 3.6 M-5.6 0 L-3.6 0 M5.6 0 L3.6 0 M-4 -4 L-2.6 -2.6 M4 4 L2.6 2.6 M-4 4 L-2.6 2.6 M4 -4 L2.6 -2.6" stroke="#777" stroke-width="1.8"/></g></svg>
</body></html>
